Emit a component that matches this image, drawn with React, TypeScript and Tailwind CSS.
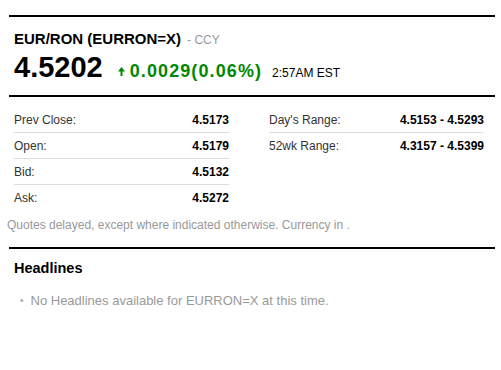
import React from "react";

const font = { fontFamily: '"Liberation Sans", Arial, sans-serif' };

function Row({ label, value, last }: { label: string; value: string; last?: boolean }) {
  return (
    <div
      className={
        "flex h-[26px] items-center justify-between " +
        (last ? "" : "border-b border-[#dddddd]")
      }
    >
      <span className="text-[12px] leading-[14px] text-[#333333]">{label}</span>
      <span className="text-[12px] leading-[14px] font-bold text-black">{value}</span>
    </div>
  );
}

export default function App() {
  return (
    <div className="h-[370px] w-[501px] bg-white" style={font}>
      <div className="ml-[9px] w-[486px] pt-[15px]">
        <div className="border-t-2 border-b-2 border-black pb-[11px]">
          <div className="flex h-[19px] items-baseline overflow-visible pl-[5px] mt-[12px]">
            <span className="text-[15px] font-bold leading-[19px] text-black">
              EUR/RON (EURRON=X)
            </span>
            <span className="ml-[6px] text-[12px] leading-[19px] text-[#999999]">- CCY</span>
          </div>
          <div className="mt-[2px] flex h-[34px] items-baseline pl-[5px]">
            <span className="text-[29px] font-bold leading-[34px] text-black">4.5202</span>
            <span className="ml-[15px] mr-[5px] self-end pb-[8px]">
              <svg width="7" height="9" viewBox="0 0 7 9">
                <polygon points="3.5,0 7,4.5 0,4.5" fill="#008800" />
                <rect x="2.5" y="4" width="2" height="5" fill="#008800" />
              </svg>
            </span>
            <span className="text-[18px] font-bold leading-[34px] tracking-[1.1px] text-[#008800]">
              0.0029(0.06%)
            </span>
            <span className="ml-[10px] text-[12px] leading-[34px] text-black">2:57AM EST</span>
          </div>
        </div>
        <div className="mt-[10px] flex gap-[40px] px-[5px]">
          <div className="w-[215px]">
            <Row label="Prev Close:" value="4.5173" />
            <Row label="Open:" value="4.5179" />
            <Row label="Bid:" value="4.5132" />
            <Row label="Ask:" value="4.5272" last />
          </div>
          <div className="w-[215px]">
            <Row label="Day's Range:" value="4.5153 - 4.5293" />
            <Row label="52wk Range:" value="4.3157 - 4.5399" last />
          </div>
        </div>
        <div className="-ml-[2px] mt-[7px] text-[12px] leading-[14px] text-[#999999]">
          Quotes delayed, except where indicated otherwise. Currency in .
        </div>
        <div className="mt-[15px] border-t-2 border-black pl-[5px] pt-[10px]">
          <div className="text-[14.5px] font-bold leading-[18px] text-black">Headlines</div>
          <div className="mt-[16px] flex h-[16px] items-center text-[13px] leading-[16px] text-[#999999]">
            <span className="ml-[6px] mr-[7px] text-[10px] text-[#aaaaaa]">•</span>
            <span>No Headlines available for EURRON=X at this time.</span>
          </div>
        </div>
      </div>
    </div>
  );
}
